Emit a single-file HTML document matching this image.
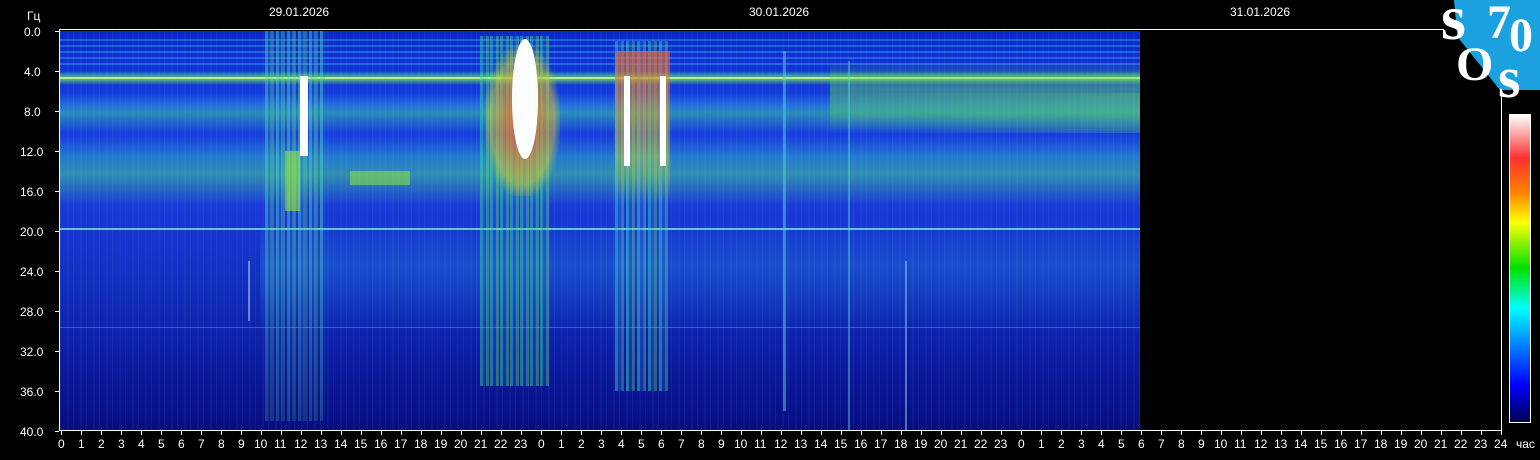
<!DOCTYPE html>
<html><head><meta charset="utf-8"><style>
body{margin:0;width:1540px;height:460px;background:#000;position:relative;overflow:hidden;font-family:"Liberation Sans",sans-serif;color:#fff}
.a{position:absolute}
.t{position:absolute;font-size:12px;line-height:12px}
#d{position:absolute;left:60px;top:31px;width:1080px;height:399px;overflow:hidden;
background:linear-gradient(to bottom,#0a28c8 0%,#1640e0 20%,#1838d8 45%,#1230c0 62%,#0c1ea6 80%,#080c80 100%)}
#d div{position:absolute}
</style></head><body>
<div id="d">
 <div style="left:0;top:8px;width:1080px;height:30px;background:repeating-linear-gradient(to bottom,rgba(60,160,240,.45) 0 2px,transparent 2px 6px)"></div>
 <div style="left:0;top:40px;width:1080px;height:14px;background:linear-gradient(to bottom,transparent,rgba(80,220,120,.6) 30%,rgba(120,230,80,.7) 60%,transparent)"></div>
 <div style="left:0;top:46px;width:1080px;height:2px;background:#b0f090"></div>
 <div style="left:0;top:62px;width:1080px;height:40px;background:linear-gradient(to bottom,transparent,rgba(50,170,220,.45) 30%,rgba(60,200,150,.55) 50%,transparent),linear-gradient(to right,transparent 25%,transparent 70%,rgba(90,220,80,.25))"></div>
 <div style="left:770px;top:30px;width:310px;height:70px;background:linear-gradient(to bottom,transparent,rgba(100,220,80,.45) 40%,rgba(100,220,80,.35) 70%,transparent)"></div>
 <div style="left:0;top:105px;width:1080px;height:70px;background:linear-gradient(to bottom,transparent,rgba(50,200,190,.45) 30%,rgba(70,210,140,.55) 55%,transparent)"></div>
 <div style="left:200px;top:190px;width:880px;height:110px;background:linear-gradient(to bottom,transparent,rgba(40,160,230,.25) 40%,transparent)"></div>
 <div style="left:0;top:197px;width:1080px;height:2px;background:#60c8c0"></div>
 <div style="left:0;top:296px;width:1080px;height:1px;background:rgba(100,180,255,.4)"></div>
 <div style="left:205px;top:0;width:60px;height:390px;background:repeating-linear-gradient(to right,rgba(80,220,180,.45) 0 3px,rgba(40,140,230,.15) 3px 5px,rgba(90,230,120,.35) 5px 9px,transparent 9px 11px);-webkit-mask:linear-gradient(to bottom,#000 45%,rgba(0,0,0,.5))"></div>
 <div style="left:240px;top:45px;width:8px;height:80px;background:#fff"></div>
 <div style="left:225px;top:120px;width:15px;height:60px;background:rgba(150,230,60,.6)"></div>
 <div style="left:420px;top:5px;width:70px;height:350px;background:repeating-linear-gradient(to right,rgba(60,220,170,.45) 0 3px,rgba(40,150,230,.2) 3px 6px,rgba(100,230,110,.4) 6px 9px,transparent 9px 10px)"></div>
 <div style="left:425px;top:15px;width:75px;height:150px;background:radial-gradient(ellipse at center,rgba(255,80,40,.85),rgba(220,200,40,.5) 60%,transparent 75%)"></div>
 <div style="left:452px;top:8px;width:26px;height:120px;background:#fff;border-radius:50%"></div>
 <div style="left:555px;top:10px;width:55px;height:350px;background:repeating-linear-gradient(to right,rgba(60,220,190,.45) 0 3px,rgba(40,150,230,.2) 3px 6px,rgba(110,230,110,.35) 6px 9px,transparent 9px 11px)"></div>
 <div style="left:555px;top:20px;width:55px;height:150px;background:linear-gradient(to bottom,rgba(255,90,40,.6),rgba(200,200,40,.45) 70%,transparent)"></div>
 <div style="left:564px;top:45px;width:6px;height:90px;background:#fff"></div>
 <div style="left:600px;top:45px;width:6px;height:90px;background:#fff"></div>
 <div style="left:290px;top:140px;width:60px;height:14px;background:rgba(140,230,60,.55)"></div>
 <div style="left:0;top:0;width:1080px;height:399px;background:repeating-linear-gradient(to right,rgba(120,200,255,.08) 0 1px,transparent 1px 7px,rgba(120,200,255,.05) 7px 9px,transparent 9px 13px)"></div>
 <div style="left:723px;top:20px;width:3px;height:360px;background:rgba(90,210,220,.5)"></div>
 <div style="left:788px;top:30px;width:2px;height:370px;background:rgba(90,210,220,.45)"></div>
 <div style="left:845px;top:230px;width:2px;height:170px;background:rgba(150,200,255,.5)"></div>
 <div style="left:188px;top:230px;width:2px;height:60px;background:rgba(200,220,255,.5)"></div>
</div>
<div class="a" style="left:59px;top:29px;width:1385px;height:1px;background:#fff"></div>
<div class="a" style="left:59px;top:29px;width:1px;height:402px;background:#fff"></div>
<div class="a" style="left:59px;top:430px;width:1443px;height:1px;background:#fff"></div>
<div class="a" style="left:1501px;top:88px;width:1px;height:343px;background:#fff"></div>
<div class="t" style="left:27px;top:10px">Гц</div>
<div id="yl"></div>
<div id="xl"></div>
<div class="t" style="left:269px;top:6px">29.01.2026</div>
<div class="t" style="left:749px;top:6px">30.01.2026</div>
<div class="t" style="left:1230px;top:6px">31.01.2026</div>
<div class="t" style="left:1516px;top:438px">час</div>
<div class="a" style="left:1509px;top:114px;width:20px;height:307px;border:1px solid #fff;background:linear-gradient(to bottom,#fff,#ff3030 14%,#ff8000 25%,#ffff00 35%,#00e000 50%,#00ffff 63%,#0080ff 75%,#0000ff 88%,#000050)"></div>
<svg class="a" style="left:1440px;top:0" width="100" height="100"><polygon points="14,0 100,0 100,90 60,90 20,40 17,34" fill="#1ba0e0"/>
<g font-family="Liberation Serif,serif" font-weight="bold" fill="#fff">
<text x="1" y="39" font-size="64">s</text><text x="47" y="38" font-size="48">7</text><text x="69" y="51" font-size="48">0</text>
<text x="16" y="80" font-size="48">O</text><text x="58" y="97" font-size="58">s</text></g></svg>
<script>
var y=document.getElementById('yl'),h='';
for(var i=0;i<=10;i++){var v=(i*4).toFixed(1),yy=31+i*40;h+='<div class="t" style="left:'+(v.length>3?20:24)+'px;top:'+(yy-5)+'px">'+v+'</div><div class="a" style="left:55px;top:'+yy+'px;width:4px;height:1px;background:#fff"></div>';}
y.innerHTML=h;h='';
for(var i=0;i<=72;i++){var x=61+i*20;var l=i==72?24:i%24;h+='<div class="a" style="left:'+x+'px;top:431px;width:1px;height:4px;background:#fff"></div><div class="t" style="left:'+(x-(l>9?7:3))+'px;top:438px">'+l+'</div>';}
document.getElementById('xl').innerHTML=h;
</script>
</body></html>
